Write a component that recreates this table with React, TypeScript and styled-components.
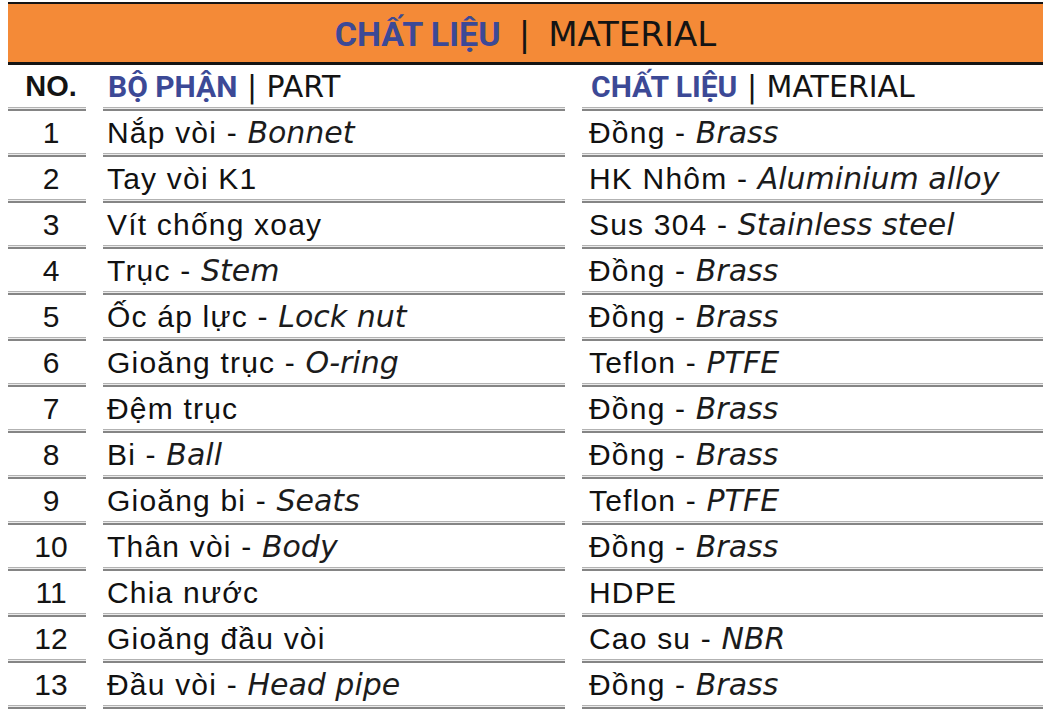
import React from "react";
import styled, { createGlobalStyle } from "styled-components";

const GlobalStyle = createGlobalStyle`
  html, body {
    margin: 0;
    padding: 0;
    background: #ffffff;
  }
`;

const Page = styled.div`
  padding: 2px 0 0 8px;
`;

const Sheet = styled.div`
  width: 1035px;
  display: flex;
  flex-direction: column;
`;

const TitleBar = styled.div`
  box-sizing: border-box;
  height: 63px;
  background: #f48a37;
  border-top: 2px solid #141414;
  border-bottom: 3px solid #141414;
  display: flex;
  align-items: center;
  justify-content: center;
  gap: 18px;
  padding: 1px 0 0 0;
`;

const Blue = styled.span<{ $size: number }>`
  font-family: Roboto, "Liberation Sans", sans-serif;
  font-weight: 700;
  font-size: ${(p) => p.$size}px;
  color: #3c4996;
`;

const Gothic = styled.span<{ $size: number }>`
  font-family: "DejaVu Sans", sans-serif;
  font-weight: 400;
  font-size: ${(p) => p.$size}px;
  color: #141414;
`;

const Row = styled.div`
  display: grid;
  grid-template-columns: 78px 462px 461px;
  column-gap: 17px;
  height: 46px;
`;

const Cell = styled.div<{ $pad: number; $center?: boolean }>`
  box-sizing: border-box;
  display: flex;
  align-items: center;
  justify-content: ${(p) => (p.$center ? "center" : "flex-start")};
  padding: 1px 0 4px ${(p) => p.$pad}px;
  background: linear-gradient(
      to bottom,
      #b2b2b2 0 1px,
      #ebebeb 1px 2px,
      #858585 2px 4px
    )
    bottom / 100% 4px no-repeat;
  white-space: pre;
`;

const Line = styled.span`
  display: inline;
  white-space: pre;
`;

const NoHead = styled.span`
  font-family: "Liberation Sans", Arial, sans-serif;
  font-weight: 700;
  font-size: 29px;
  color: #141414;
`;

const Num = styled.span`
  font-family: "Liberation Sans", Arial, sans-serif;
  font-size: 30px;
  color: #141414;
`;

const Vi = styled.span`
  font-family: "Liberation Sans", Arial, sans-serif;
  font-size: 30px;
  letter-spacing: 1.2px;
  color: #111111;
`;

const En = styled.em`
  font-family: "DejaVu Sans", sans-serif;
  font-style: oblique;
  font-size: 30px;
  letter-spacing: 0;
  color: #1c1c1c;
`;

type Item = { vi: string; en?: string };

const rows: { part: Item; mat: Item }[] = [
  { part: { vi: "Nắp vòi", en: "Bonnet" }, mat: { vi: "Đồng", en: "Brass" } },
  { part: { vi: "Tay vòi K1" }, mat: { vi: "HK Nhôm", en: "Aluminium alloy" } },
  { part: { vi: "Vít chống xoay" }, mat: { vi: "Sus 304", en: "Stainless steel" } },
  { part: { vi: "Trục", en: "Stem" }, mat: { vi: "Đồng", en: "Brass" } },
  { part: { vi: "Ốc áp lực", en: "Lock nut" }, mat: { vi: "Đồng", en: "Brass" } },
  { part: { vi: "Gioăng trục", en: "O-ring" }, mat: { vi: "Teflon", en: "PTFE" } },
  { part: { vi: "Đệm trục" }, mat: { vi: "Đồng", en: "Brass" } },
  { part: { vi: "Bi", en: "Ball" }, mat: { vi: "Đồng", en: "Brass" } },
  { part: { vi: "Gioăng bi", en: "Seats" }, mat: { vi: "Teflon", en: "PTFE" } },
  { part: { vi: "Thân vòi", en: "Body" }, mat: { vi: "Đồng", en: "Brass" } },
  { part: { vi: "Chia nước" }, mat: { vi: "HDPE" } },
  { part: { vi: "Gioăng đầu vòi" }, mat: { vi: "Cao su", en: "NBR" } },
  { part: { vi: "Đầu vòi", en: "Head pipe" }, mat: { vi: "Đồng", en: "Brass" } },
];

const Label: React.FC<{ item: Item }> = ({ item }) => (
  <Line>
    <Vi>{item.en ? `${item.vi} - ` : item.vi}</Vi>
    {item.en && <En>{item.en}</En>}
  </Line>
);

export default function App() {
  return (
    <>
      <GlobalStyle />
      <Page>
        <Sheet>
          <TitleBar>
            <Blue $size={34}>CHẤT LIỆU</Blue>
            <Gothic $size={34}>|</Gothic>
            <Gothic $size={34}>MATERIAL</Gothic>
          </TitleBar>
          <Row>
            <Cell $pad={8} $center>
              <NoHead>NO.</NoHead>
            </Cell>
            <Cell $pad={5}>
              <Line>
                <Blue $size={30}>BỘ PHẬN</Blue>
                <Gothic $size={30}> | PART</Gothic>
              </Line>
            </Cell>
            <Cell $pad={9}>
              <Line>
                <Blue $size={30}>CHẤT LIỆU</Blue>
                <Gothic $size={30}> | MATERIAL</Gothic>
              </Line>
            </Cell>
          </Row>
          {rows.map((r, i) => (
            <Row key={i}>
              <Cell $pad={8} $center>
                <Num>{i + 1}</Num>
              </Cell>
              <Cell $pad={4}>
                <Label item={r.part} />
              </Cell>
              <Cell $pad={7}>
                <Label item={r.mat} />
              </Cell>
            </Row>
          ))}
        </Sheet>
      </Page>
    </>
  );
}
